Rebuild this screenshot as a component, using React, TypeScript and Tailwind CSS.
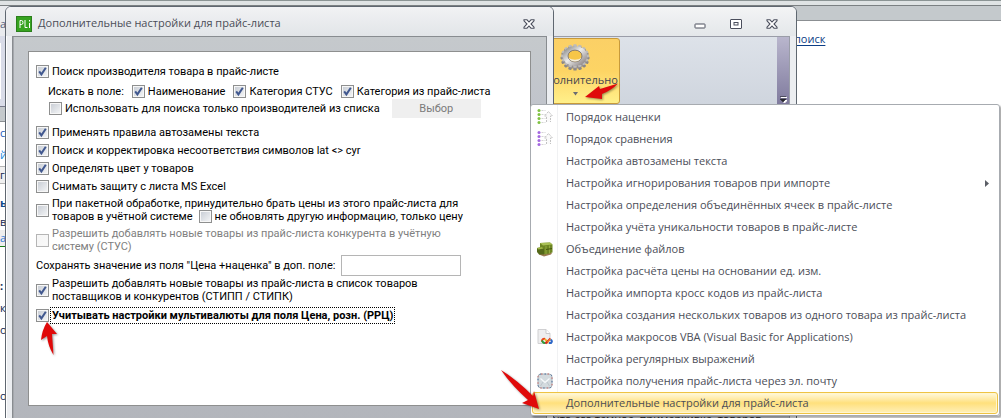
import React from "react";

type CheckProps = { id: string; checked?: boolean; disabled?: boolean };

function Check({ id, checked, disabled }: CheckProps) {
  return (
    <span className="grid size-[13px] shrink-0">
      <input
        id={id}
        type="checkbox"
        defaultChecked={checked}
        disabled={disabled}
        className="peer col-start-1 row-start-1 size-[13px] appearance-none border border-[#8e8f8f] bg-linear-to-br from-[#c6cbd3] to-[#f6f7f8] shadow-[inset_0_0_0_1px_#f7f7f7] disabled:border-[#b5b5b5] disabled:from-[#f4f4f4] disabled:to-[#fafafa]"
      />
      <svg
        viewBox="0 0 13 13"
        className="pointer-events-none invisible col-start-1 row-start-1 size-[13px] peer-checked:visible"
      >
        <path d="M3.2 6.4 L5.4 9.4 L9.8 2.8" fill="none" stroke="#41588f" strokeWidth="2" />
      </svg>
    </span>
  );
}

type OptionProps = CheckProps & { children: React.ReactNode; className?: string };

function Option({ id, checked, disabled, children, className = "" }: OptionProps) {
  return (
    <div className={`flex items-center gap-[3px] ${className}`}>
      <Check id={id} checked={checked} disabled={disabled} />
      <label htmlFor={id} className="whitespace-nowrap">
        {children}
      </label>
    </div>
  );
}

function CloseGlyph() {
  return (
    <svg viewBox="0 0 12 10" className="h-[10px] w-[12px]">
      <path
        d="M1 .8h3l2 2.2L8 .8h3v1L8 5l3 3.2v1H8L6 7 4 9.200H1v-1L4 5 1 1.800z"
        fill="#fff"
        stroke="#4a4e5c"
        strokeWidth="1.100"
      />
    </svg>
  );
}

function Gear() {
  const teeth = Array.from({ length: 16 }, (_, i) => i * 22.5);
  return (
    <svg viewBox="0 0 30 28" className="h-[28px] w-[30px]">
      <defs>
        <linearGradient id="metal" x1="0" y1="0" x2="1" y2="1">
          <stop offset="0" stopColor="#8e8e8e" />
          <stop offset=".45" stopColor="#ececec" />
          <stop offset="1" stopColor="#8d8585" />
        </linearGradient>
      </defs>
      <g transform="translate(15 15) scale(1 .87)">
        {teeth.map((a) => (
          <rect key={a} x="-1.700" y="-14.500" width="3.400" height="6" rx="1" fill="#8b8787" transform={`rotate(${a})`} />
        ))}
        <circle r="12.200" fill="#969090" />
      </g>
      <g transform="translate(15 13) scale(1 .84)">
        {teeth.map((a) => (
          <rect key={a} x="-1.700" y="-14" width="3.400" height="6" rx="1" fill="#bdbbbb" transform={`rotate(${a})`} />
        ))}
        <circle r="9.500" fill="none" stroke="url(#metal)" strokeWidth="5" />
        <circle r="7" fill="#f6c648" stroke="#7b7474" strokeWidth="1" />
        <path d="M-6.500 2A7 7 0 0 0 6.500 2A8 6 0 0 1-6.500 2" fill="#f5efe0" />
      </g>
    </svg>
  );
}

function OrderIcon({ color }: { color: string }) {
  return (
    <svg viewBox="0 0 16 16" className="size-4">
      {[1.5, 5.5, 9.5, 13.5].map((y) => (
        <g key={y}>
          <circle cx="2" cy={y} r="1.500" fill={color} />
          <path d={`M4.500 ${y}h4`} stroke="#d4d4d4" strokeDasharray="2 1" />
        </g>
      ))}
      <path d="M9.500 13V7H7.500L11.500 2.500 15.500 7H13.500V13" fill="#fafafa" stroke="#c2c2c2" strokeDasharray="2 1" />
    </svg>
  );
}

function BalesIcon() {
  return (
    <svg viewBox="0 0 16 16" className="size-4">
      <path d="M2 13.500L7 15.500 14 13.500 15 12 3 11z" fill="#9b7a52" />
      <path d="M3 2L13 1.500 15.500 3.500V11.500L8 13.500 3 11z" fill="#6d8623" />
      <path d="M3 2L13 1.500 15.500 3.500 6 4.500z" fill="#a9c055" />
      <path d="M0 7L5 6 7 8V13.500L2 13.500 0 11z" fill="#55691a" />
      <path d="M0 7L5 6 6.500 7.500 1.500 8.500z" fill="#a0b747" />
      <path d="M9 5v8M12.500 4.500v8" stroke="#93aa40" />
      <path d="M9 8.500l6-1" stroke="#46570f" />
    </svg>
  );
}

function MacroIcon() {
  return (
    <svg viewBox="0 0 16 16" className="size-4">
      <path d="M1 .5H9L13 4.500V14.500H1z" fill="#eeeeef" stroke="#d0d0d2" />
      <path d="M9 .5V4.500H13" fill="#fff" stroke="#c9c9cb" />
      <g fill="none" strokeWidth="2">
        <path d="M5 12.500a2.200 2.200 0 0 1 3-2.500" stroke="#e9481e" />
        <path d="M5 11.500q1.500 3.500 4 2" stroke="#2f9c3c" />
        <path d="M8 10l3 4" stroke="#f0b41c" />
        <path d="M8.500 14.500L13.500 9.500" stroke="#df2a22" />
        <path d="M13.500 10.500q2.500 1.500.5 3.500h-2" stroke="#2e68c8" />
        <path d="M10.500 13l3-3" stroke="#f5bd20" strokeWidth="1" />
      </g>
    </svg>
  );
}

function MailIcon() {
  return (
    <svg viewBox="0 0 16 16" className="size-4">
      <rect x="1" y="1" width="14" height="14" rx="3" fill="#d3dade" stroke="#a9b3ba" strokeWidth="1" />
      <rect x="1" y="1" width="14" height="14" rx="3" fill="none" stroke="#c86a66" strokeWidth="1" strokeDasharray="1.500 5" />
      <rect x="1" y="1" width="14" height="14" rx="3" fill="none" stroke="#4b6e9a" strokeWidth="1" strokeDasharray="1.500 5" strokeDashoffset="3" />
      <path d="M3.500 5.500L8 9.500 12.500 5.500" fill="none" stroke="#f8fafb" strokeWidth="1.200" />
      <path d="M3.500 13L6 9M12.500 13L10 9" stroke="#bcc5cb" />
    </svg>
  );
}

type Item = { text: string; icon?: React.ReactNode; submenu?: boolean; active?: boolean };

const items: Item[] = [
  { text: "Порядок наценки", icon: <OrderIcon color="#7fc241" /> },
  { text: "Порядок сравнения", icon: <OrderIcon color="#a367e0" /> },
  { text: "Настройка автозамены текста" },
  { text: "Настройка игнорирования товаров при импорте", submenu: true },
  { text: "Настройка определения объединённых ячеек в прайс-листе" },
  { text: "Настройка учёта уникальности товаров в прайс-листе" },
  { text: "Объединение файлов", icon: <BalesIcon /> },
  { text: "Настройка расчёта цены на основании ед. изм." },
  { text: "Настройка импорта кросс кодов из прайс-листа" },
  { text: "Настройка создания нескольких товаров из одного товара из прайс-листа" },
  { text: "Настройка макросов VBA (Visual Basic for Applications)", icon: <MacroIcon /> },
  { text: "Настройка регулярных выражений" },
  { text: "Настройка получения прайс-листа через эл. почту", icon: <MailIcon /> },
  { text: "Дополнительные настройки для прайс-листа", active: true },
];

function Menu() {
  return (
    <div
      role="menu"
      className="absolute top-[104px] right-[1px] left-[530px] flex flex-col rounded-[3px] border border-[#a7abb0] bg-linear-to-r from-white from-[26px] via-[#e2e4e7] via-[26px] to-white to-[27px] p-px text-[11px] text-[#4b4e58] shadow-[2px_2px_2px_#00000055]"
    >
      {items.map((it) => (
        <button
          key={it.text}
          role="menuitem"
          className={
            it.active
              ? "flex h-[22px] items-center rounded-[3px] border border-[#eec343] bg-linear-to-b from-[#fff9dd] via-[#ffe07c] to-[#fff0b8] text-left shadow-[inset_0_0_0_1px_#fff6d0]"
              : "flex h-[22px] items-center border border-transparent text-left"
          }
        >
          <span className="ml-1 flex w-[29px] shrink-0">{it.icon}</span>
          <span className="grow whitespace-nowrap">{it.text}</span>
          {it.submenu && (
            <svg viewBox="0 0 4 7" className="mr-2 h-[7px] w-1">
              <path d="M0 0L4 3.500 0 7z" fill="#5b5e66" />
            </svg>
          )}
        </button>
      ))}
    </div>
  );
}

function MainWindow() {
  return (
    <section className="absolute -bottom-4 top-[6px] left-[300px] flex w-[497px] flex-col rounded-t-[6px] border border-[#5f6770] bg-[#eceef1] shadow-[inset_1px_1px_0_#fff]">
      <header className="flex h-[29px] items-center justify-end gap-6 rounded-t-[5px] bg-linear-to-b from-[#f3f4f5] to-[#e4e7ea] pt-1 pr-[18px]">
        <button aria-label="Свернуть">
          <svg viewBox="0 0 12 10" className="h-[10px] w-[12px]">
            <rect x="1" y="5" width="10" height="4" rx=".5" fill="#fff" stroke="#4a4e5c" />
          </svg>
        </button>
        <button aria-label="Развернуть">
          <svg viewBox="0 0 12 10" className="h-[10px] w-[12px]">
            <rect x=".5" y=".5" width="11" height="9" rx=".5" fill="#fff" stroke="#4a4e5c" />
            <rect x="4" y="3.500" width="4" height="2.500" fill="#fff" stroke="#4a4e5c" />
          </svg>
        </button>
        <button aria-label="Закрыть">
          <CloseGlyph />
        </button>
      </header>
      <div className="mr-[6px] flex grow flex-col border-t border-r border-[#9a9da8] bg-[#c0c4c9]">
        <div className="flex h-[68px] justify-end bg-linear-to-b from-[#dde2e9] to-[#cfd5de]">
          <button className="mt-px mr-[157px] flex h-[66px] w-[90px] flex-col items-center rounded-[3px] border border-[#c89a3a] bg-linear-to-b from-[#fbd066] via-[#fdd464] to-[#fff08a] pt-1 text-[11px] text-[#44474f]">
            <Gear />
            <span className="leading-[18px]">Дополнительно</span>
            <svg viewBox="0 0 5 4" className="mt-[3px] h-1 w-[5px]">
              <path d="M0 0h5L2.500 3.500z" fill="#6a6c72" />
            </svg>
          </button>
          <div className="flex w-3 flex-col items-center justify-end bg-linear-to-b from-[#b9b6cd] to-[#7f7a9d] pb-[2px]">
            <svg viewBox="0 0 7 7" className="size-[7px]">
              <path d="M1 1.500h6M2 4.500h5L4.500 7z" fill="#fff" stroke="#fff" />
              <path d="M0 .5h6M0 3h6L3 6z" fill="#26262e" stroke="#26262e" strokeWidth=".6" />
            </svg>
          </div>
        </div>
        <p className="pt-[306px] pl-[252px] text-[11px] leading-4 whitespace-nowrap text-[#222]">что его темное, примеркивке, товаров</p>
      </div>
    </section>
  );
}

function SettingsDialog() {
  return (
    <section className="absolute -bottom-4 top-[6px] left-[5px] flex w-[549px] flex-col rounded-t-[6px] border border-[#5f6770] bg-[#eceef1] shadow-[inset_1px_1px_0_#fff]">
      <header className="flex h-[29px] items-center rounded-t-[5px] bg-linear-to-b from-[#f1f2f4] to-[#e2e5e8] pt-1 pr-[18px] pl-[10px]">
        <svg viewBox="0 0 16 16" className="size-4">
          <rect x=".5" y=".5" width="15" height="15" fill="#37a320" stroke="#2b7f1c" />
          <g fill="none" stroke="#fff">
            <path d="M4 12V4.500H5.500Q7 4.500 7 6.500T5.500 8.500H4M9 4V11.500H11.500M13.500 7V12M13.500 4V5.500" />
          </g>
        </svg>
        <h1 className="ml-[6px] grow text-[11px] whitespace-nowrap text-[#4b4e58]">Дополнительные настройки для прайс-листа</h1>
        <button aria-label="Закрыть">
          <CloseGlyph />
        </button>
      </header>
      <div className="mx-[6px] grow border border-[#888c90] bg-linear-to-b from-[#c5c9cc] via-[#bec1cb] via-30% to-[#b2b5bb] px-[15px] pt-[14px] shadow-[inset_1px_0_0_#a4a7ac]">
        <form className="flex flex-col border border-[#8e8f8f] bg-white pt-3 pr-3 pb-[81px] pl-[7px] font-['Roboto',sans-serif] text-[11px] leading-[13px] text-black">
          <Option id="maker" checked className="h-[14px]">Поиск производителя товара в прайс-листе</Option>
          <fieldset className="mt-[7px] ml-3 flex h-[14px] items-center gap-2">
            <span className="whitespace-nowrap">Искать в поле:</span>
            <Option id="name" checked>Наименование</Option>
            <Option id="stus" checked>Категория СТУС</Option>
            <Option id="price" checked>Категория из прайс-листа</Option>
          </fieldset>
          <div className="ml-[13px] flex h-[19px] items-center gap-3">
            <Option id="list">Использовать для поиска только производителей из списка</Option>
            <button type="button" disabled className="h-[19px] w-[89px] bg-[#efefef] text-[#7a7a7a]">Выбор</button>
          </div>
          <div className="mt-[7px] flex flex-col gap-1">
            <Option id="replace" checked className="h-[14px]">Применять правила автозамены текста</Option>
            <Option id="latcyr" checked className="h-[14px]">Поиск и корректировка несоответствия символов lat &lt;&gt; cyr</Option>
            <Option id="color" checked className="h-[14px]">Определять цвет у товаров</Option>
            <Option id="excel" className="h-[14px]">Снимать защиту с листа MS Excel</Option>
            <div className="flex items-center gap-[3px]">
              <Check id="batch" />
              <div className="whitespace-nowrap">
                <label htmlFor="batch" className="block">При пакетной обработке, принудительно брать цены из этого прайс-листа для</label>
                <div className="flex h-[13px] items-center gap-[6px]">
                  <label htmlFor="batch">товаров в учётной системе</label>
                  <Option id="only">не обновлять другую информацию, только цену</Option>
                </div>
              </div>
            </div>
            <Option id="rival" disabled className="text-[#808080]">
              Разрешить добавлять новые товары из прайс-листа конкурента в учётную
              <br />
              систему (СТУС)
            </Option>
          </div>
          <div className="mt-[2px] flex h-[21px] items-center gap-[6px]">
            <label htmlFor="extra" className="whitespace-nowrap">Сохранять значение из поля "Цена +наценка" в доп. поле:</label>
            <input id="extra" className="h-[21px] w-[120px] border border-[#b5b5b5] bg-white px-1" />
          </div>
          <Option id="suppliers" checked className="mt-px">
            Разрешить добавлять новые товары из прайс-листа в список товаров
            <br />
            поставщиков и конкурентов (СТИПП / СТИПК)
          </Option>
          <div className="mt-1 flex items-center gap-px">
            <Check id="currency" checked />
            <label htmlFor="currency" className="border border-dotted border-black px-px py-px font-bold whitespace-nowrap">
              Учитывать настройки мультивалюты для поля Цена, розн. (РРЦ)
            </label>
          </div>
        </form>
      </div>
    </section>
  );
}

function Desktop() {
  return (
    <div className="flex h-full flex-col overflow-hidden bg-white text-[11px]">
      <div className="h-[6px] border-t border-b border-t-[#8b9494] border-b-[#7b8082] bg-[#dfe3e4]" />
      <div className="flex grow">
        <div className="flex w-[300px] flex-col">
          <div className="h-[30px] bg-[#e9ebee] pt-[9px] leading-[18px] text-[#55617a]">ар</div>
          <div className="h-[71px] border-b border-[#77798a] bg-[#d9dce8] py-[7px]">
            <div className="h-full w-[1px] bg-white" />
          </div>
          <div className="h-[15px] border-b border-[#8b8f92] bg-[#c4c9cc]" />
          <div className="flex flex-col leading-[22px] text-[#10264f]">
            <span className="text-[#1b58b8]">с-</span>
            <span className="text-[#1689e0]">й</span>
            <span className="border-y border-[#b5b5b5] bg-[#f0f0f0] leading-4">г</span>
            <span className="pt-2 font-bold text-[#0c4a8c]">ь</span>
            <span className="leading-4">в</span>
            <span className="border-b border-[#177d17] bg-[#eeeeee] leading-4 text-[#2a7ad8]">а</span>
            <span className="pt-7 font-bold">:</span>
            <span>к</span>
            <span>о</span>
            <span className="pt-11">о</span>
          </div>
        </div>
        <div className="grow">
          <div className="h-[15px] border-b border-[#8b8f92] bg-[#c4c9cc]" />
          <div className="pt-[9px] pl-[494px]">
            <a href="#search" className="leading-[18px] text-[#0c3d85] underline underline-offset-2">поиск</a>
          </div>
        </div>
      </div>
    </div>
  );
}

function Arrows() {
  return (
    <svg viewBox="0 0 1001 418" className="pointer-events-none absolute top-0 left-0 h-[418px] w-[1001px] fill-[#e00a0a] drop-shadow-[1px_1px_1px_#00000066]">
      <path d="M585 97L599 86 600 89 618 83.500Q612 90 602 94L602 99z" />
      <path d="M47 322L57 334 52 334 53.500 355Q48 346 47 336L41 340Q42 330 47 322z" />
      <path d="M501 370Q517 380 533 396L534 391 539 409 522 403 528 400Q512 386 501 370z" />
    </svg>
  );
}

export default function App() {
  return (
    <main className="relative h-screen overflow-hidden font-['Open_Sans','Noto_Sans',sans-serif]">
      <Desktop />
      <MainWindow />
      <SettingsDialog />
      <Menu />
      <Arrows />
    </main>
  );
}
